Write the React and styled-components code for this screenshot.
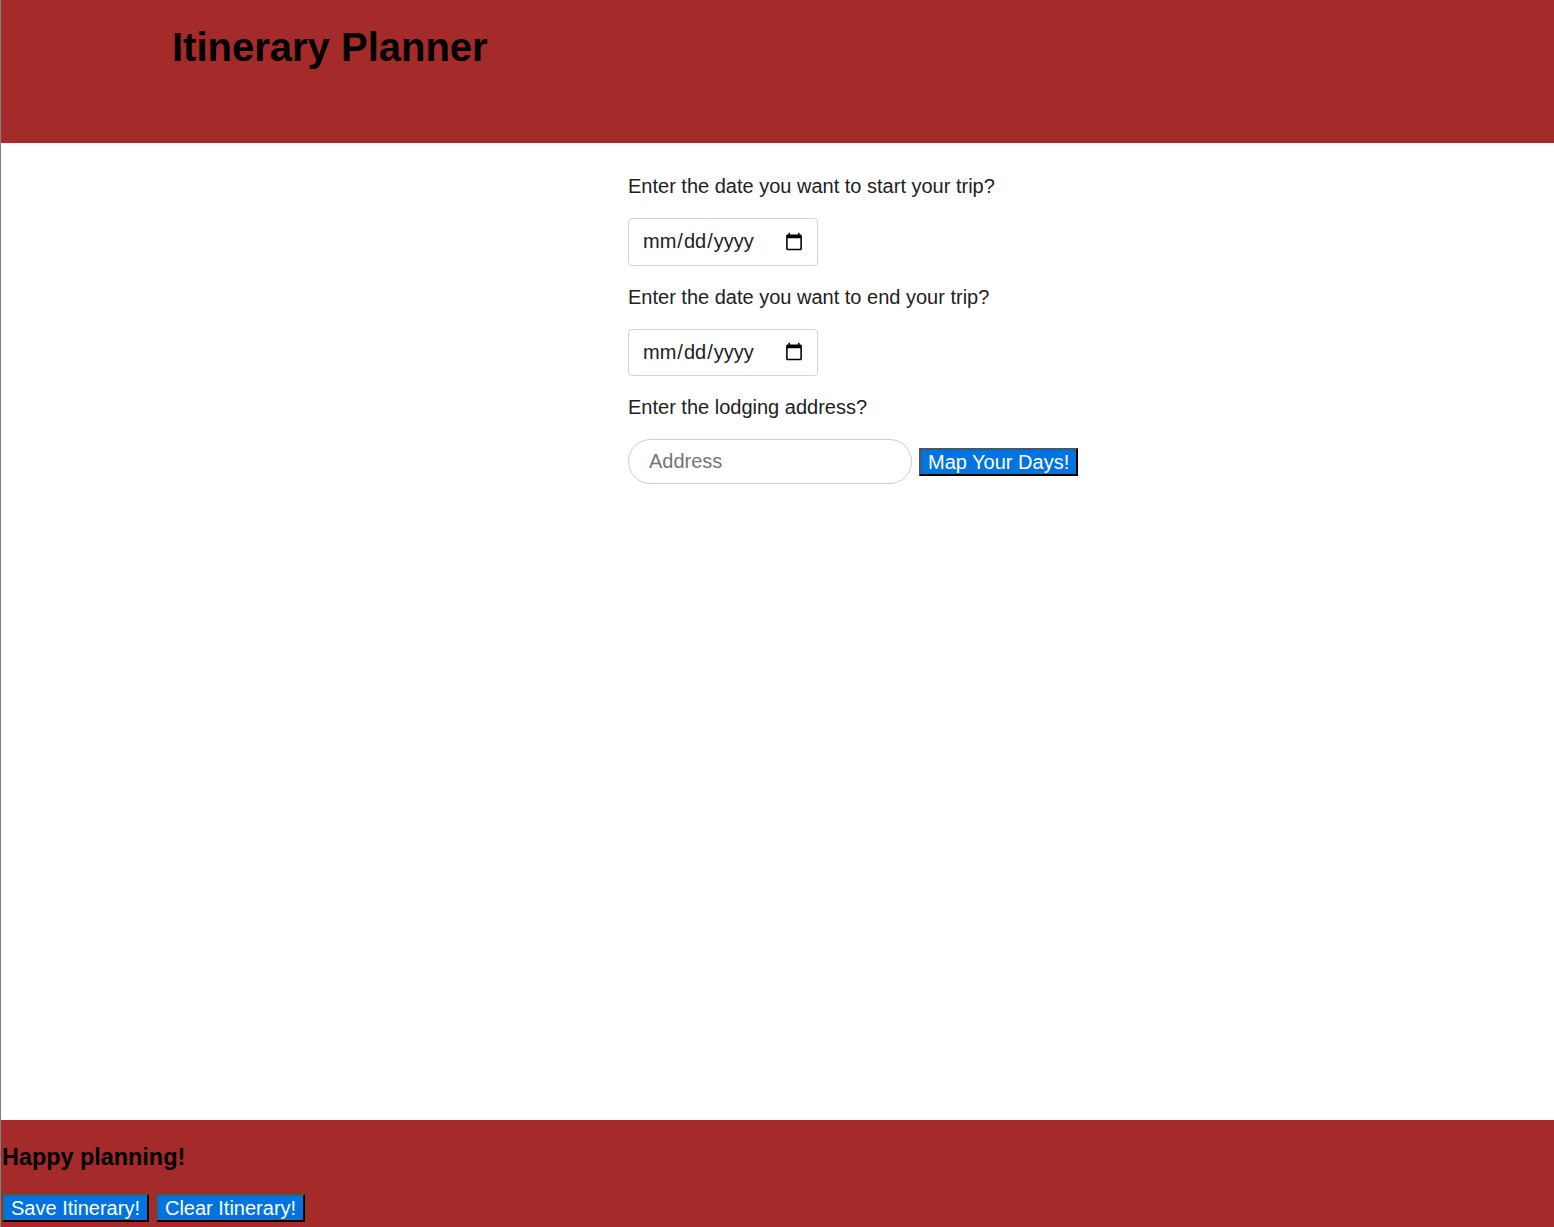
import styled, { createGlobalStyle } from "styled-components";

const GlobalStyle = createGlobalStyle`
  html, body {
    margin: 0;
    padding: 0;
    background: #fff;
  }
  body {
    font-family: "Liberation Sans", Arial, sans-serif;
  }
`;

const Page = styled.div`
  min-height: 100vh;
  display: flex;
  flex-direction: column;
  border-left: 1px solid #808080;
  box-sizing: border-box;
`;

const Header = styled.header`
  background: #a52a2a;
  height: 143px;
  padding: 25px 0 0 171px;
  box-sizing: border-box;
`;

const Title = styled.h1`
  margin: 0;
  font-size: 40px;
  font-weight: bold;
  color: #000;
`;

const Main = styled.main`
  flex: 1;
  display: flex;
  flex-direction: column;
  align-items: flex-start;
  gap: 20px;
  padding: 32px 0 0 627px;
`;

const Label = styled.label`
  font-size: 20px;
  line-height: 23px;
  color: #212121;
`;

const DateInput = styled.input`
  box-sizing: border-box;
  width: 190px;
  height: 47.5px;
  padding: 0 11px 0 13px;
  border: 1px solid #ced4da;
  border-radius: 4px;
  font-family: "Liberation Sans", Arial, sans-serif;
  font-size: 20px;
  color: #212121;
  background: #fff;
`;

const AddressRow = styled.div`
  display: flex;
  align-items: center;
  gap: 7px;
`;

const AddressInput = styled.input`
  box-sizing: border-box;
  width: 284px;
  height: 45px;
  padding: 0 20px;
  border: 1px solid #ccc;
  border-radius: 23px;
  font-family: "Liberation Sans", Arial, sans-serif;
  font-size: 20px;
  &::placeholder {
    color: #757575;
  }
`;

const BlueButton = styled.button`
  box-sizing: border-box;
  height: 28px;
  padding: 0 7px;
  background: #0074de;
  color: #fff;
  border: 2px outset #000;
  font-family: "Liberation Sans", Arial, sans-serif;
  font-size: 20px;
  line-height: 1;
  cursor: pointer;
`;

const Footer = styled.footer`
  background: #a52a2a;
  padding: 25px 0 5px 1px;
  display: flex;
  flex-direction: column;
  gap: 24px;
`;

const Farewell = styled.h3`
  margin: 0;
  font-size: 23.4px;
  line-height: 25px;
  font-weight: bold;
  color: #000;
`;

const ButtonRow = styled.div`
  display: flex;
  gap: 7px;
`;

export default function App() {
  return (
    <>
      <GlobalStyle />
      <Page>
        <Header>
          <Title>Itinerary Planner</Title>
        </Header>
        <Main>
          <Label htmlFor="start">Enter the date you want to start your trip?</Label>
          <DateInput id="start" type="date" />
          <Label htmlFor="end">Enter the date you want to end your trip?</Label>
          <DateInput id="end" type="date" />
          <Label htmlFor="address">Enter the lodging address?</Label>
          <AddressRow>
            <AddressInput id="address" type="text" placeholder="Address" />
            <BlueButton>Map Your Days!</BlueButton>
          </AddressRow>
        </Main>
        <Footer>
          <Farewell>Happy planning!</Farewell>
          <ButtonRow>
            <BlueButton>Save Itinerary!</BlueButton>
            <BlueButton>Clear Itinerary!</BlueButton>
          </ButtonRow>
        </Footer>
      </Page>
    </>
  );
}
